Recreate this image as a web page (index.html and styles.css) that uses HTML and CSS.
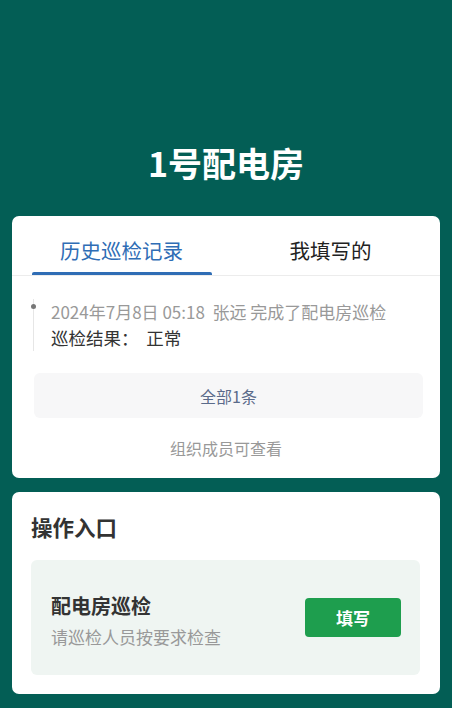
FILE: index.html
```html
<!DOCTYPE html>
<html lang="zh">
<head>
<meta charset="utf-8">
<link rel="stylesheet" href="styles.css">
</head>
<body>
<div class="page">
  <header class="header">
    <h1 class="title">1号配电房</h1>
  </header>

  <section class="card history">
    <div class="tabs">
      <div class="tab active"><span>历史巡检记录</span></div>
      <div class="tab"><span>我填写的</span></div>
    </div>
    <div class="timeline">
      <div class="tl-item">
        <span class="tl-dot"></span>
        <div class="tl-meta">2024年7月8日 05:18&nbsp; 张远 完成了配电房巡检</div>
        <div class="tl-result">巡检结果：&nbsp;&nbsp;正常</div>
      </div>
    </div>
    <div class="all-btn">全部1条</div>
    <div class="note">组织成员可查看</div>
  </section>

  <section class="card entry">
    <h2 class="entry-title">操作入口</h2>
    <div class="entry-box">
      <div class="entry-text">
        <div class="entry-name">配电房巡检</div>
        <div class="entry-desc">请巡检人员按要求检查</div>
      </div>
      <div class="fill-btn">填写</div>
    </div>
  </section>
</div>
</body>
</html>
```

FILE: styles.css
```css
* { box-sizing: border-box; }
html, body {
  margin: 0;
  padding: 0;
  background: #035e55;
}
body {
  font-family: "Noto Sans CJK SC", "Noto Sans", sans-serif;
  color: #333;
  width: 452px;
  height: 708px;
  overflow: hidden;
}
.header {
  padding-top: 143px;
  padding-bottom: 33px;
}
.title {
  margin: 0;
  text-align: center;
  color: #fff;
  font-size: 34px;
  font-weight: 700;
  line-height: 40px;
}
.card {
  background: #fff;
  margin: 0 12px;
  border-radius: 7px;
}
.tabs {
  display: flex;
  padding: 0 5px;
  border-bottom: 1px solid #ececec;
}
.tab {
  flex: 1;
  display: flex;
  justify-content: center;
  position: relative;
  padding-top: 18px;
  padding-bottom: 9px;
  font-size: 20.5px;
  line-height: 32px;
  color: #222;
}
.tab.active {
  color: #2f6db5;
}
.tab.active::after {
  content: "";
  position: absolute;
  bottom: 0;
  left: 50%;
  width: 180px;
  margin-left: -90px;
  height: 3px;
  background: #2f6db5;
  border-radius: 2px 2px 0 0;
}
.timeline {
  padding: 23px 20px 0 21px;
}
.tl-item {
  position: relative;
  border-left: 1.5px solid #e6e6e6;
  padding-left: 17px;
}
.tl-dot {
  position: absolute;
  left: -3.5px;
  top: 5px;
  width: 5px;
  height: 5px;
  border-radius: 50%;
  background: #777;
}
.tl-meta {
  font-size: 17px;
  line-height: 26px;
  color: #999;
  white-space: nowrap;
}
.tl-result {
  font-size: 17.5px;
  line-height: 26px;
  color: #333;
}
.all-btn {
  margin: 22px 17px 0 22px;
  height: 45px;
  background: #f7f7f8;
  border-radius: 6px;
  display: flex;
  align-items: center;
  justify-content: center;
  font-size: 16px;
  color: #5b6b8a;
}
.note {
  padding: 15px 0 15px;
  text-align: center;
  font-size: 16px;
  line-height: 30px;
  color: #999;
}
.entry {
  margin-top: 14px;
  padding: 16px 20px 19px 19px;
}
.entry-title {
  margin: 0 0 14px;
  font-size: 21.5px;
  font-weight: 700;
  line-height: 38px;
  color: #333;
}
.entry-box {
  background: #eff5f2;
  border-radius: 6px;
  height: 115px;
  padding: 7px 19px 0 20px;
  display: flex;
  align-items: center;
  justify-content: space-between;
}
.entry-name {
  font-size: 20px;
  font-weight: 700;
  line-height: 28px;
  color: #333;
}
.entry-desc {
  margin-top: 4px;
  font-size: 17px;
  line-height: 26px;
  color: #999;
}
.fill-btn {
  width: 96px;
  height: 39px;
  margin-bottom: 7px;
  background: #1e9e4e;
  border-radius: 4px;
  color: #fff;
  font-size: 17px;
  font-weight: 700;
  display: flex;
  align-items: center;
  justify-content: center;
}
```
